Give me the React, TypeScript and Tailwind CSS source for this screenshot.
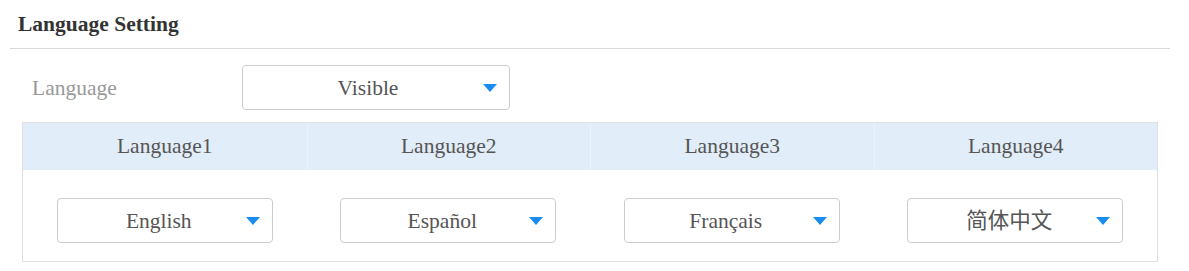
const serif = "font-['Liberation_Serif','Noto_Sans_CJK_SC',serif]";

function Caret() {
  return (
    <svg
      width="14"
      height="8"
      viewBox="0 0 14 8"
      className="absolute right-[12px] top-1/2 -translate-y-1/2"
    >
      <path d="M0 0 H14 L7 8 Z" fill="#1a8cf0" />
    </svg>
  );
}

function Select({ value, className }: { value: string; className: string }) {
  return (
    <div
      className={`relative flex items-center justify-center rounded-[4px] border border-[#cccccc] bg-white text-[21.5px] text-[#555] ${className}`}
    >
      <span className="translate-y-[1px]">{value}</span>
      <Caret />
    </div>
  );
}

const columns = [
  { label: "Language1", value: "English" },
  { label: "Language2", value: "Español" },
  { label: "Language3", value: "Français" },
  { label: "Language4", value: "简体中文" },
];

export default function App() {
  return (
    <div className={`w-[1189px] h-[271px] bg-white ${serif}`}>
      <div className="ml-[10px] mr-[19px] flex h-[49px] items-center border-b border-[#d9d9d9] pl-[8px] text-[21.5px] font-bold text-[#333]">
        Language Setting
      </div>

      <div className="mt-[16px] flex items-center">
        <div className="w-[242px] pl-[32px] text-[21.5px] text-[#999] translate-y-[1px]">
          Language
        </div>
        <Select value="Visible" className="h-[45px] w-[268px] pr-[16px]" />
      </div>

      <div className="ml-[22px] mt-[12px] w-[1136px] border border-[#e0e0e0]">
        <div className="grid h-[47px] grid-cols-4 bg-[#e1edf8]">
          {columns.map((col, i) => (
            <div
              key={col.label}
              className={`flex items-center justify-center text-[21.5px] text-[#555] ${
                i > 0 ? "border-l border-[#ecf3fa]" : ""
              }`}
            >
              {col.label}
            </div>
          ))}
        </div>
        <div className="grid grid-cols-4 pt-[28px] pb-[18px]">
          {columns.map((col) => (
            <div key={col.label} className="flex justify-center">
              <Select value={col.value} className="h-[45px] w-[216px] pr-[12px]" />
            </div>
          ))}
        </div>
      </div>
    </div>
  );
}
